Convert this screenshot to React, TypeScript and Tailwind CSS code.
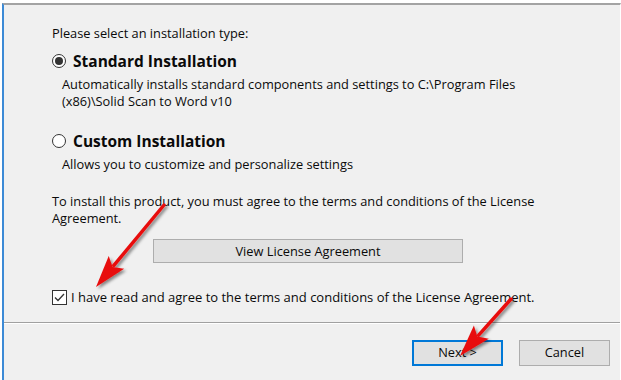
import React from 'react';

const font = { fontFamily: '"Open Sans", "Noto Sans", Arial, sans-serif' };

const Radio: React.FC<{ checked?: boolean }> = ({ checked }) => (
  <span className="flex h-[14px] w-[14px] shrink-0 items-center justify-center rounded-full border border-[#333333] bg-white">
    {checked && <span className="h-[8px] w-[8px] rounded-full bg-[#333333]" />}
  </span>
);

const Arrow: React.FC<{ x1: number; y1: number; x2: number; y2: number }> = ({ x1, y1, x2, y2 }) => {
  const dx = x2 - x1;
  const dy = y2 - y1;
  const len = Math.sqrt(dx * dx + dy * dy);
  const ux = dx / len;
  const uy = dy / len;
  const head = 32;
  const half = 10;
  const bx = x2 - ux * head;
  const by = y2 - uy * head;
  const px = -uy;
  const py = ux;
  const pts = `${x2},${y2} ${bx + px * half},${by + py * half} ${bx + ux * 6},${by + uy * 6} ${bx - px * half},${by - py * half}`;
  return (
    <g filter="url(#shadow)">
      <line x1={x1} y1={y1} x2={bx + ux * 4} y2={by + uy * 4} stroke="#e8100f" strokeWidth={3.5} strokeLinecap="round" />
      <polygon points={pts} fill="#e8100f" />
    </g>
  );
};

export default function App() {
  return (
    <div className="h-[380px] w-[621px] overflow-hidden bg-white pl-[2px] pt-[3px] text-[#0a0a0a]" style={font}>
      <div className="relative flex h-[377px] flex-col border-l-2 border-t-2 border-r border-l-[#3c8ad6] border-t-[#a3a3a3] border-r-white bg-[#f0f0f0]">
        <div className="flex h-[317px] flex-col pl-[48px] pr-[26px] text-[12.8px] leading-[17px]">
          <p className="mt-[20px]">Please select an installation type:</p>

          <div className="mt-[9px] flex items-center gap-[7px]">
            <Radio checked />
            <span className="text-[15.5px] font-bold leading-[20px]">Standard Installation</span>
          </div>
          <p className="mt-[5px] pl-[10px]">
            Automatically installs standard components and settings to C:\Program Files
            <br />
            (x86)\Solid Scan to Word v10
          </p>

          <div className="mt-[21px] flex items-center gap-[7px]">
            <Radio />
            <span className="text-[15.5px] font-bold leading-[20px]">Custom Installation</span>
          </div>
          <p className="mt-[5px] pl-[10px]">Allows you to customize and personalize settings</p>

          <p className="mt-[20px]">
            To install this product, you must agree to the terms and conditions of the License
            <br />
            Agreement.
          </p>

          <div className="mt-[12px] pl-[101px]">
            <button className="h-[24px] w-[310px] border border-[#adadad] bg-[#e1e1e1] text-[12.8px]">
              View License Agreement
            </button>
          </div>

          <label className="mt-[26px] flex items-center gap-[4px] whitespace-nowrap">
            <span className="flex h-[15px] w-[15px] shrink-0 items-center justify-center border border-[#333333] bg-white">
              <svg width="11" height="9" viewBox="0 0 11 9">
                <path d="M1 4.5 L4 7.5 L10 1" fill="none" stroke="#333333" strokeWidth="1.3" />
              </svg>
            </span>
            <span className="text-[13px]">I have read and agree to the terms and conditions of the License Agreement.</span>
          </label>
        </div>

        <div className="h-[2px] border-t border-[#a0a0a0] bg-white" />

        <div className="flex justify-end gap-[16px] pr-[10px] pt-[16px] text-[12.8px]">
          <button className="h-[26px] w-[91px] border-2 border-[#0078d7] bg-[#e1e1e1]">Next &gt;</button>
          <button className="h-[26px] w-[91px] border border-[#adadad] bg-[#e1e1e1]">Cancel</button>
        </div>

        <svg className="pointer-events-none absolute left-[-2px] top-[-3px]" width="621" height="380">
          <defs>
            <filter id="shadow" x="-20%" y="-20%" width="140%" height="140%">
              <feDropShadow dx="2" dy="2" stdDeviation="1.5" floodColor="#000" floodOpacity="0.45" />
            </filter>
          </defs>
          <Arrow x1={162} y1={203} x2={94} y2={285} />
          <Arrow x1={509} y1={297} x2={458} y2={354} />
        </svg>
      </div>
    </div>
  );
}
